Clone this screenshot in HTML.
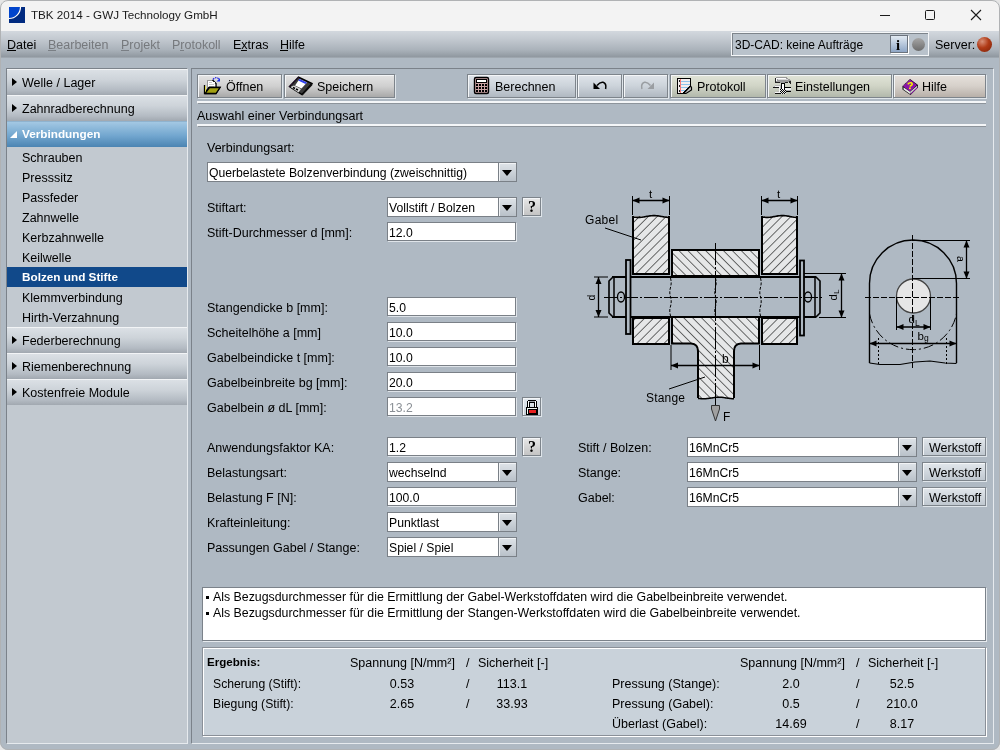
<!DOCTYPE html><html><head><meta charset="utf-8"><style>
*{margin:0;padding:0;box-sizing:border-box}
html,body{width:1000px;height:750px;overflow:hidden;background:#e6e6e6;font-family:"Liberation Sans", sans-serif}
.t{position:absolute;white-space:nowrap;line-height:16px;font-family:"Liberation Sans", sans-serif;will-change:transform}
svg{will-change:transform}
.win{position:absolute;left:0;top:0;width:1000px;height:750px;border-radius:8px;overflow:hidden;background:#afb9c3}
.wb{position:absolute;left:0;top:0;width:1000px;height:750px;border-radius:8px;border:1px solid #b0b2b4;pointer-events:none}
.fld{position:absolute;background:#fff;border:1px solid #7a8087;box-shadow:1px 1px 0 #dfe4e9}
.cbtn{position:absolute;background:linear-gradient(#dfe4e9,#b9c1c9);border:1px solid #7a8087;box-shadow:inset 1px 1px 0 #f2f4f6}
.tri{position:absolute;width:0;height:0;border-left:5px solid transparent;border-right:5px solid transparent;border-top:6px solid #000}
.btn{position:absolute;border:1px solid #7d848b;box-shadow:inset 1px 1px 0 #f4f6f8, 1px 1px 0 #dfe5ea}
</style></head><body><div class="win">
<div style="position:absolute;left:0px;top:0px;width:1000px;height:31px;background:#f3f3f3"></div>
<svg style="position:absolute;left:9px;top:7px" width="16" height="16" viewBox="0 0 16 16">
<rect x="0" y="0" width="16" height="16" fill="#002a80"/>
<path d="M0 0 H11 A11 11 0 0 1 0 11 Z" fill="#0044cc"/>
<path d="M11.5 0 A11.5 11.5 0 0 1 0 11.5" fill="none" stroke="#fff" stroke-width="1.2"/>
</svg>
<div class="t" style="left:31px;top:7px;font-size:11.65px;font-weight:normal;color:#1a1a1a;">TBK 2014 - GWJ Technology GmbH</div>
<div style="position:absolute;left:880px;top:15px;width:10px;height:1px;background:#1a1a1a"></div>
<div style="position:absolute;left:925px;top:10px;width:10px;height:10px;border:1px solid #1a1a1a;border-radius:1.5px"></div>
<svg style="position:absolute;left:970px;top:9px" width="12" height="12" viewBox="0 0 12 12"><path d="M1 1 L11 11 M11 1 L1 11" stroke="#1a1a1a" stroke-width="1.1"/></svg>
<div style="position:absolute;left:0px;top:31px;width:1000px;height:27px;background:linear-gradient(#d3d8de,#c3c9d0 30%,#aab2ba 70%,#9199a1 95%,#a6aeb6)"></div>
<div class="t" style="left:7px;top:37px;font-size:12.5px;font-weight:normal;color:#000;">Datei</div>
<div class="t" style="left:48px;top:37px;font-size:12.5px;font-weight:normal;color:#76797d;">Bearbeiten</div>
<div class="t" style="left:121px;top:37px;font-size:12.5px;font-weight:normal;color:#76797d;">Projekt</div>
<div class="t" style="left:172px;top:37px;font-size:12.5px;font-weight:normal;color:#76797d;">Protokoll</div>
<div class="t" style="left:233px;top:37px;font-size:12.5px;font-weight:normal;color:#000;">Extras</div>
<div class="t" style="left:280px;top:37px;font-size:12.5px;font-weight:normal;color:#000;">Hilfe</div>
<div style="position:absolute;left:7px;top:50px;width:9px;height:1px;background:#000"></div>
<div style="position:absolute;left:48px;top:50px;width:8px;height:1px;background:#7a7f85"></div>
<div style="position:absolute;left:121px;top:50px;width:8px;height:1px;background:#7a7f85"></div>
<div style="position:absolute;left:180px;top:50px;width:4px;height:1px;background:#7a7f85"></div>
<div style="position:absolute;left:241px;top:50px;width:6px;height:1px;background:#000"></div>
<div style="position:absolute;left:280px;top:50px;width:8px;height:1px;background:#000"></div>
<div style="position:absolute;left:731px;top:32px;width:198px;height:24px;border:1px solid #f4f6f8;box-shadow:inset 1px 1px 0 #7d848b;background:#b9c2cb"></div>
<div class="t" style="left:735px;top:37px;font-size:12px;font-weight:normal;color:#000;">3D-CAD: keine Aufträge</div>
<div style="position:absolute;left:890px;top:35px;width:18px;height:18px;background:linear-gradient(#e2eaf2,#b8c8dc 50%,#8ea6c6);border:1px solid #6b737d;box-shadow:1px 1px 0 #fff"></div>
<div class="t" style="left:896px;top:35px;font:bold 14.5px/20px Liberation Serif,serif;color:#000">i</div>
<div style="position:absolute;left:912px;top:38px;width:13px;height:13px;border-radius:50%;background:linear-gradient(#a6a6a6,#6c6c6c)"></div>
<div class="t" style="left:935px;top:37px;font-size:12.5px;font-weight:normal;color:#000;">Server:</div>
<div style="position:absolute;left:977px;top:37px;width:15px;height:15px;border-radius:50%;background:radial-gradient(circle at 35% 30%,#d89078,#b03a16 45%,#7a220a)"></div>
<div style="position:absolute;left:6px;top:68px;width:182px;height:676px;background:#c2c9d0;border-left:1px solid #7b828a;border-top:1px solid #7b828a;border-right:1px solid #e6eaee;border-bottom:1px solid #e6eaee"></div>
<div style="position:absolute;left:7px;top:69px;width:180px;height:26px;background:linear-gradient(#dbe0e5,#cdd3d9 40%,#b4bbc3 80%,#a1a8b0);border-top:1px solid #f2f4f6"></div>
<div style="position:absolute;left:12px;top:78px;width:0;height:0;border-top:4.5px solid transparent;border-bottom:4.5px solid transparent;border-left:5px solid #000"></div>
<div class="t" style="left:22px;top:75px;font-size:12.5px;font-weight:normal;color:#000;">Welle / Lager</div>
<div style="position:absolute;left:7px;top:95px;width:180px;height:26px;background:linear-gradient(#dbe0e5,#cdd3d9 40%,#b4bbc3 80%,#a1a8b0);border-top:1px solid #f2f4f6"></div>
<div style="position:absolute;left:12px;top:104px;width:0;height:0;border-top:4.5px solid transparent;border-bottom:4.5px solid transparent;border-left:5px solid #000"></div>
<div class="t" style="left:22px;top:101px;font-size:12.5px;font-weight:normal;color:#000;">Zahnradberechnung</div>
<div style="position:absolute;left:7px;top:121px;width:180px;height:26px;background:linear-gradient(#a3c8e3,#72a6cf 55%,#4b84b2);border-top:1px solid #8fb3cf"></div>
<div style="position:absolute;left:10px;top:131px;width:0;height:0;border-left:7px solid transparent;border-bottom:7px solid #fff"></div>
<div class="t" style="left:22px;top:126px;font-size:11.75px;font-weight:bold;color:#fff;">Verbindungen</div>
<div class="t" style="left:22px;top:150px;font-size:12.5px;font-weight:normal;color:#000;">Schrauben</div>
<div class="t" style="left:22px;top:170px;font-size:12.5px;font-weight:normal;color:#000;">Presssitz</div>
<div class="t" style="left:22px;top:190px;font-size:12.5px;font-weight:normal;color:#000;">Passfeder</div>
<div class="t" style="left:22px;top:210px;font-size:12.5px;font-weight:normal;color:#000;">Zahnwelle</div>
<div class="t" style="left:22px;top:230px;font-size:12.5px;font-weight:normal;color:#000;">Kerbzahnwelle</div>
<div class="t" style="left:22px;top:250px;font-size:12.5px;font-weight:normal;color:#000;">Keilwelle</div>
<div style="position:absolute;left:7px;top:267px;width:180px;height:20px;background:#11498a"></div>
<div class="t" style="left:22px;top:269px;font-size:11.75px;font-weight:bold;color:#fff;">Bolzen und Stifte</div>
<div class="t" style="left:22px;top:290px;font-size:12.5px;font-weight:normal;color:#000;">Klemmverbindung</div>
<div class="t" style="left:22px;top:310px;font-size:12.5px;font-weight:normal;color:#000;">Hirth-Verzahnung</div>
<div style="position:absolute;left:7px;top:327px;width:180px;height:26px;background:linear-gradient(#dbe0e5,#cdd3d9 40%,#b4bbc3 80%,#a1a8b0);border-top:1px solid #f2f4f6"></div>
<div style="position:absolute;left:12px;top:336px;width:0;height:0;border-top:4.5px solid transparent;border-bottom:4.5px solid transparent;border-left:5px solid #000"></div>
<div class="t" style="left:22px;top:333px;font-size:12.5px;font-weight:normal;color:#000;">Federberechnung</div>
<div style="position:absolute;left:7px;top:353px;width:180px;height:26px;background:linear-gradient(#dbe0e5,#cdd3d9 40%,#b4bbc3 80%,#a1a8b0);border-top:1px solid #f2f4f6"></div>
<div style="position:absolute;left:12px;top:362px;width:0;height:0;border-top:4.5px solid transparent;border-bottom:4.5px solid transparent;border-left:5px solid #000"></div>
<div class="t" style="left:22px;top:359px;font-size:12.5px;font-weight:normal;color:#000;">Riemenberechnung</div>
<div style="position:absolute;left:7px;top:379px;width:180px;height:26px;background:linear-gradient(#dbe0e5,#cdd3d9 40%,#b4bbc3 80%,#a1a8b0);border-top:1px solid #f2f4f6"></div>
<div style="position:absolute;left:12px;top:388px;width:0;height:0;border-top:4.5px solid transparent;border-bottom:4.5px solid transparent;border-left:5px solid #000"></div>
<div class="t" style="left:22px;top:385px;font-size:12.5px;font-weight:normal;color:#000;">Kostenfreie Module</div>
<svg style="position:absolute;left:0;top:0" width="1000" height="750" viewBox="0 0 1000 750">
<defs>
<pattern id="hg" patternUnits="userSpaceOnUse" width="6.3" height="9" patternTransform="rotate(45)">
<rect width="6.3" height="9" fill="#e6e7e8"/><line x1="0" y1="0" x2="0" y2="9" stroke="#000" stroke-width="1.1"/></pattern>
<pattern id="hs" patternUnits="userSpaceOnUse" width="6.3" height="9" patternTransform="rotate(-45)">
<rect width="6.3" height="9" fill="#e6e7e8"/><line x1="0" y1="0" x2="0" y2="9" stroke="#000" stroke-width="1.1"/></pattern>
</defs>
<rect x="633" y="216" width="36" height="58" fill="url(#hg)"/>
<path d="M633,216 V274 H669 V216" fill="none" stroke="#000" stroke-width="2"/>
<polyline points="633.0,216.9 634.0,217.1 635.0,217.2 636.0,217.3 637.0,217.4 638.0,217.4 639.0,217.4 640.0,217.4 641.0,217.3 642.0,217.2 643.0,217.0 644.0,216.9 645.0,216.7 646.0,216.5 647.0,216.3 648.0,216.2 649.0,216.0 650.0,215.9 651.0,215.8 652.0,215.7 653.0,215.6 654.0,215.6 655.0,215.6 656.0,215.7 657.0,215.8 658.0,215.9 659.0,216.0 660.0,216.2 661.0,216.4 662.0,216.5 663.0,216.7 664.0,216.9 665.0,217.0 666.0,217.2 667.0,217.3 668.0,217.4 669.0,217.4" fill="none" stroke="#000" stroke-width="1.6"/>
<rect x="633" y="318" width="36" height="26" fill="url(#hg)" stroke="#000" stroke-width="2"/>
<rect x="762" y="216" width="35" height="58" fill="url(#hg)"/>
<path d="M762,216 V274 H797 V216" fill="none" stroke="#000" stroke-width="2"/>
<polyline points="762.0,216.9 763.0,217.1 764.0,217.2 765.0,217.3 766.0,217.4 767.0,217.4 768.0,217.4 769.0,217.3 770.0,217.3 771.0,217.1 772.0,217.0 773.0,216.8 774.0,216.6 775.0,216.5 776.0,216.3 777.0,216.1 778.0,215.9 779.0,215.8 780.0,215.7 781.0,215.6 782.0,215.6 783.0,215.6 784.0,215.6 785.0,215.7 786.0,215.8 787.0,216.0 788.0,216.1 789.0,216.3 790.0,216.5 791.0,216.7 792.0,216.9 793.0,217.0 794.0,217.2 795.0,217.3 796.0,217.4 797.0,217.4" fill="none" stroke="#000" stroke-width="1.6"/>
<rect x="762" y="318" width="35" height="26" fill="url(#hg)" stroke="#000" stroke-width="2"/>
<rect x="672" y="250" width="87" height="26" fill="url(#hs)" stroke="#000" stroke-width="2"/>
<path d="M672,318 H759 V343.5 H741 Q734,344 734,351 V398 H698 V351 Q698,344 691,343.5 H672 Z" fill="url(#hs)" stroke="none"/>
<path d="M672,318 V343.5 H691 Q698,344 698,351 V398" fill="none" stroke="#000" stroke-width="2"/>
<path d="M759,318 V343.5 H741 Q734,344 734,351 V398" fill="none" stroke="#000" stroke-width="2"/>
<polyline points="698.0,398.4 699.0,398.5 700.0,398.6 701.0,398.7 702.0,398.8 703.0,398.8 704.0,398.8 705.0,398.8 706.0,398.7 707.0,398.6 708.0,398.5 709.0,398.3 710.0,398.2 711.0,398.0 712.0,397.9 713.0,397.7 714.0,397.6 715.0,397.4 716.0,397.3 717.0,397.3 718.0,397.2 719.0,397.2 720.0,397.2 721.0,397.3 722.0,397.3 723.0,397.4 724.0,397.6 725.0,397.7 726.0,397.9 727.0,398.0 728.0,398.2 729.0,398.3 730.0,398.5 731.0,398.6 732.0,398.7 733.0,398.8 734.0,398.8" fill="none" stroke="#000" stroke-width="1.5"/>
<rect x="612" y="277" width="205" height="40" fill="#afb9c3"/>
<line x1="612" y1="277" x2="816" y2="277" stroke="#000" stroke-width="2"/>
<line x1="612" y1="317" x2="816" y2="317" stroke="#000" stroke-width="2"/>
<path d="M614,277 H613 L609,281 V313 L613,317 H614" fill="none" stroke="#000" stroke-width="1.6"/>
<line x1="614" y1="277" x2="614" y2="317" stroke="#000" stroke-width="1.5"/>
<path d="M815,277 H816 L820,281 V313 L816,317 H815" fill="none" stroke="#000" stroke-width="1.6"/>
<line x1="815" y1="277" x2="815" y2="317" stroke="#000" stroke-width="1.5"/>
<ellipse cx="621" cy="297" rx="3.5" ry="5" fill="none" stroke="#000" stroke-width="1.3"/>
<ellipse cx="808" cy="297" rx="3.5" ry="5" fill="none" stroke="#000" stroke-width="1.3"/>
<rect x="626" y="260" width="4.5" height="74" fill="#afb9c3" stroke="#000" stroke-width="1.8"/>
<rect x="800" y="260.5" width="4" height="75" fill="#afb9c3" stroke="#000" stroke-width="1.8"/>
<polyline points="670.5,278.0 670.7,279.0 670.9,280.0 671.1,281.0 671.2,282.0 671.2,283.0 671.1,284.0 671.0,285.0 670.8,286.0 670.6,287.0 670.4,288.0 670.1,289.0 670.0,290.0 669.8,291.0 669.8,292.0 669.8,293.0 669.9,294.0 670.1,295.0 670.3,296.0 670.5,297.0 670.8,298.0 671.0,299.0 671.1,300.0 671.2,301.0 671.2,302.0 671.1,303.0 671.0,304.0 670.8,305.0 670.6,306.0 670.3,307.0 670.1,308.0 669.9,309.0 669.8,310.0 669.8,311.0 669.8,312.0 670.0,313.0 670.1,314.0 670.3,315.0 670.6,316.0" fill="none" stroke="#000" stroke-width="1" stroke-dasharray="3,1.5"/>
<polyline points="715.5,278.0 715.7,279.0 715.9,280.0 716.1,281.0 716.2,282.0 716.2,283.0 716.1,284.0 716.0,285.0 715.8,286.0 715.6,287.0 715.4,288.0 715.1,289.0 715.0,290.0 714.8,291.0 714.8,292.0 714.8,293.0 714.9,294.0 715.1,295.0 715.3,296.0 715.5,297.0 715.8,298.0 716.0,299.0 716.1,300.0 716.2,301.0 716.2,302.0 716.1,303.0 716.0,304.0 715.8,305.0 715.6,306.0 715.3,307.0 715.1,308.0 714.9,309.0 714.8,310.0 714.8,311.0 714.8,312.0 715.0,313.0 715.1,314.0 715.3,315.0 715.6,316.0" fill="none" stroke="#000" stroke-width="1" stroke-dasharray="3,1.5"/>
<polyline points="760.5,278.0 760.7,279.0 760.9,280.0 761.1,281.0 761.2,282.0 761.2,283.0 761.1,284.0 761.0,285.0 760.8,286.0 760.6,287.0 760.4,288.0 760.1,289.0 760.0,290.0 759.8,291.0 759.8,292.0 759.8,293.0 759.9,294.0 760.1,295.0 760.3,296.0 760.5,297.0 760.8,298.0 761.0,299.0 761.1,300.0 761.2,301.0 761.2,302.0 761.1,303.0 761.0,304.0 760.8,305.0 760.6,306.0 760.3,307.0 760.1,308.0 759.9,309.0 759.8,310.0 759.8,311.0 759.8,312.0 760.0,313.0 760.1,314.0 760.3,315.0 760.6,316.0" fill="none" stroke="#000" stroke-width="1" stroke-dasharray="3,1.5"/>
<line x1="604" y1="297.5" x2="824" y2="297.5" stroke="#000" stroke-width="1" stroke-dasharray="14,2,2,2"/>
<line x1="715.5" y1="243" x2="715.5" y2="406" stroke="#000" stroke-width="1" stroke-dasharray="22,2,2,2"/>
<line x1="632.5" y1="196" x2="632.5" y2="215" stroke="#000" stroke-width="1"/>
<line x1="669.5" y1="196" x2="669.5" y2="215" stroke="#000" stroke-width="1"/>
<line x1="632.5" y1="200.5" x2="669.5" y2="200.5" stroke="#000" stroke-width="1.3"/>
<path d="M632.5,200.5 l7,-3 v6 z M669.5,200.5 l-7,-3 v6 z" fill="#000"/>
<text x="649" y="198" font-family="Liberation Sans" font-size="11.5">t</text>
<line x1="761.5" y1="196" x2="761.5" y2="215" stroke="#000" stroke-width="1"/>
<line x1="797.5" y1="196" x2="797.5" y2="215" stroke="#000" stroke-width="1"/>
<line x1="761.5" y1="200.5" x2="797.5" y2="200.5" stroke="#000" stroke-width="1.3"/>
<path d="M761.5,200.5 l7,-3 v6 z M797.5,200.5 l-7,-3 v6 z" fill="#000"/>
<text x="777" y="198" font-family="Liberation Sans" font-size="11.5">t</text>
<text x="585" y="223.5" font-family="Liberation Sans" font-size="12" letter-spacing="0.3">Gabel</text>
<line x1="605" y1="228" x2="641" y2="240" stroke="#000" stroke-width="1"/>
<line x1="594" y1="277" x2="608" y2="277" stroke="#000" stroke-width="1"/>
<line x1="594" y1="317" x2="608" y2="317" stroke="#000" stroke-width="1"/>
<line x1="598.5" y1="277" x2="598.5" y2="317" stroke="#000" stroke-width="1.3"/>
<path d="M598.5,277 l-3,7 h6 z M598.5,317 l-3,-7 h6 z" fill="#000"/>
<text transform="translate(594.5,300.5) rotate(-90)" font-family="Liberation Sans" font-size="10.5">d</text>
<line x1="804" y1="273.5" x2="846" y2="273.5" stroke="#000" stroke-width="1"/>
<line x1="819" y1="317.5" x2="846" y2="317.5" stroke="#000" stroke-width="1"/>
<line x1="841.5" y1="273.5" x2="841.5" y2="317.5" stroke="#000" stroke-width="1.3"/>
<path d="M841.5,273.5 l-3,7 h6 z M841.5,317.5 l-3,-7 h6 z" fill="#000"/>
<text transform="translate(836.5,300.5) rotate(-90)" font-family="Liberation Sans" font-size="11.5">d<tspan font-size="8" dy="2.5">L</tspan></text>
<line x1="671" y1="345" x2="671" y2="370" stroke="#000" stroke-width="1"/>
<line x1="759.5" y1="345" x2="759.5" y2="370" stroke="#000" stroke-width="1"/>
<line x1="671" y1="365.5" x2="759.5" y2="365.5" stroke="#000" stroke-width="1.3"/>
<path d="M671,365.5 l7,-3 v6 z M759.5,365.5 l-7,-3 v6 z" fill="#000"/>
<text x="722" y="363" font-family="Liberation Sans" font-size="12">b</text>
<text x="646" y="402" font-family="Liberation Sans" font-size="12" letter-spacing="0.2">Stange</text>
<line x1="669" y1="389" x2="705" y2="377" stroke="#000" stroke-width="1"/>
<path d="M711.5,405.5 H719.5 V409 L715.5,421 L711.5,409 Z" fill="#a0a0a0" stroke="#333" stroke-width="1"/>
<text x="723" y="421" font-family="Liberation Sans" font-size="12">F</text>
<path d="M869.5,363 V283.5 A43.5,43.5 0 0 1 956.5,283.5 V363" fill="none" stroke="#000" stroke-width="1.4"/>
<polyline points="869.5,363 880,364.5 900,364.5 915,362 930,361 945,363 956.5,363.5" fill="none" stroke="#000" stroke-width="1.2"/>
<path d="M869.5,313.7 A44.3,44.3 0 0 0 956.5,313.7" fill="none" stroke="#000" stroke-width="1" stroke-dasharray="10,3,2,3"/>
<line x1="878.5" y1="338" x2="878.5" y2="364" stroke="#000" stroke-width="1" stroke-dasharray="2,2"/>
<line x1="946.5" y1="338" x2="946.5" y2="364" stroke="#000" stroke-width="1" stroke-dasharray="2,2"/>
<circle cx="913.5" cy="296" r="17" fill="#e6e6e6" stroke="#444" stroke-width="1.3"/>
<line x1="912.5" y1="235" x2="912.5" y2="368" stroke="#000" stroke-width="1" stroke-dasharray="6,2"/>
<line x1="865" y1="297.5" x2="961" y2="297.5" stroke="#000" stroke-width="1" stroke-dasharray="6,2"/>
<line x1="913" y1="240.5" x2="970" y2="240.5" stroke="#000" stroke-width="1"/>
<line x1="913" y1="278.5" x2="970" y2="278.5" stroke="#000" stroke-width="1"/>
<line x1="966.5" y1="240.5" x2="966.5" y2="278.5" stroke="#000" stroke-width="1.3"/>
<path d="M966.5,240.5 l-3,7 h6 z M966.5,278.5 l-3,-7 h6 z" fill="#000"/>
<text transform="translate(957,256) rotate(90)" font-family="Liberation Sans" font-size="10.5">a</text>
<line x1="896.5" y1="297" x2="896.5" y2="330" stroke="#000" stroke-width="1"/>
<line x1="930.5" y1="297" x2="930.5" y2="330" stroke="#000" stroke-width="1"/>
<line x1="896.5" y1="327" x2="930.5" y2="327" stroke="#000" stroke-width="1.3"/>
<path d="M896.5,327 l7,-3 v6 z M930.5,327 l-7,-3 v6 z" fill="#000"/>
<text x="908.5" y="323" font-family="Liberation Sans" font-size="11.5">d<tspan font-size="8.5" dy="2.5">L</tspan></text>
<line x1="869.5" y1="343.5" x2="956.5" y2="343.5" stroke="#000" stroke-width="1.3"/>
<path d="M869.5,343.5 l7,-3 v6 z M956.5,343.5 l-7,-3 v6 z" fill="#000"/>
<text x="917.5" y="339.5" font-family="Liberation Sans" font-size="11.5">b<tspan font-size="8.5" dy="1">g</tspan></text>
</svg>
<div style="position:absolute;left:191px;top:68px;width:803px;height:676px;border-left:1px solid #7b828a;border-top:1px solid #7b828a;border-right:1px solid #e6eaee;border-bottom:1px solid #e6eaee"></div>
<div class="btn" style="left:197px;top:74px;width:85px;height:24px;background:linear-gradient(#e4e4e4,#d0d0d0 50%,#a9a9a9)"></div>
<div class="t" style="left:226px;top:79px;font-size:12.5px;font-weight:normal;color:#000;">Öffnen</div>
<div class="btn" style="left:284px;top:74px;width:111px;height:24px;background:linear-gradient(#e4e4e4,#d0d0d0 50%,#a9a9a9)"></div>
<div class="t" style="left:317px;top:79px;font-size:12.5px;font-weight:normal;color:#000;">Speichern</div>
<div class="btn" style="left:467px;top:74px;width:109px;height:24px;background:linear-gradient(#dfe4ea,#ccd3da 50%,#b0b8c1)"></div>
<div class="t" style="left:495px;top:79px;font-size:12.5px;font-weight:normal;color:#000;">Berechnen</div>
<div class="btn" style="left:577px;top:74px;width:45px;height:24px;background:linear-gradient(#dfe4ea,#ccd3da 50%,#b0b8c1)"></div>
<div class="btn" style="left:623px;top:74px;width:45px;height:24px;background:linear-gradient(#dfe4ea,#ccd3da 50%,#b0b8c1)"></div>
<div class="btn" style="left:670px;top:74px;width:96px;height:24px;background:linear-gradient(#e1e4d8,#d0d4c6 50%,#b2b8ab)"></div>
<div class="t" style="left:697px;top:79px;font-size:12.5px;font-weight:normal;color:#000;">Protokoll</div>
<div class="btn" style="left:767px;top:74px;width:125px;height:24px;background:linear-gradient(#e1e4d8,#d0d4c6 50%,#b2b8ab)"></div>
<div class="t" style="left:795px;top:79px;font-size:12.5px;font-weight:normal;color:#000;">Einstellungen</div>
<div class="btn" style="left:893px;top:74px;width:93px;height:24px;background:linear-gradient(#e6e1dc,#d6d0ca 50%,#b8b0a9)"></div>
<div class="t" style="left:922px;top:79px;font-size:12.5px;font-weight:normal;color:#000;">Hilfe</div>
<svg style="position:absolute;left:200px;top:74px" width="24" height="24" viewBox="0 0 24 24" shape-rendering="crispEdges">
<path d="M7 6 H13 L16 9 V13 H7 Z" fill="#fff" stroke="#999" stroke-width="1"/>
<path d="M12.5 6 L16 9.5 V13" fill="none" stroke="#000" stroke-width="1.2" shape-rendering="auto"/>
<rect x="13" y="7.5" width="1.5" height="1.5" fill="#fff"/>
<path d="M8.5 8.5 H12 M8.5 10.5 H14 M8.5 12.5 H14" stroke="#bbb" stroke-width="0.8"/>
<path d="M4.5 11 V19.5 H16 L20 13.5 H9 L5.5 18" fill="none" stroke="#000" stroke-width="1.3" shape-rendering="auto"/>
<path d="M5 11.5 V19 H6 L10 14 H19.5 L15.8 19 H6" fill="#a3a012"/>
<path d="M5.5 11.5 V18.5" stroke="#e0dc40" stroke-width="1"/>
<path d="M4.5 19.5 H16 L20 13.5 H9.5 L5.5 18.8" fill="none" stroke="#000" stroke-width="1.3" shape-rendering="auto"/>
<path d="M13 5.5 Q16 2 19 5" fill="none" stroke="#2020e0" stroke-width="1.2" stroke-dasharray="1.5,1" shape-rendering="auto"/>
<path d="M20 4 L20 7.5 L16.5 7.5 Z" fill="#1a30f0" shape-rendering="auto"/>
</svg>
<svg style="position:absolute;left:286px;top:74px" width="30" height="24" viewBox="0 0 30 24" shape-rendering="crispEdges">
<g shape-rendering="auto">
<path d="M3.5 12.5 L12.5 3 L26 9.5 L16 20.5 Z" fill="#3a3a3a" stroke="#000" stroke-width="1.4"/>
<path d="M13.5 5 L21 8.5 L15.5 14.5 L9 11.5 Z" fill="#fff"/>
<path d="M13.5 5 L21 8.5 L19.5 10 L12.2 6.5 Z" fill="#3040f0"/>
<path d="M4.5 13 L8 11.5 L15 15 L12.5 18.5 Z" fill="#d8d8d8"/>
<path d="M7 13.5 L9 14.5 M10 15 L12 16" stroke="#000" stroke-width="1.5"/>
<path d="M16 20.5 L26 9.5 L26.5 11 L16.5 21.5 Z" fill="#111"/>
<path d="M3.5 12.5 L12.5 3" stroke="#5a1a70" stroke-width="0.8" stroke-dasharray="1,1"/>
</g></svg>
<svg style="position:absolute;left:470px;top:74px" width="24" height="24" viewBox="0 0 24 24" shape-rendering="crispEdges">
<rect x="4.5" y="3.5" width="14" height="16" rx="1.5" fill="#caa3a5" stroke="#000" stroke-width="1.4" shape-rendering="auto"/>
<rect x="6.5" y="5.5" width="10" height="3" fill="#fff" stroke="#000" stroke-width="1"/>
<rect x="6" y="10" width="2" height="2" fill="#000"/><rect x="6" y="13" width="2" height="2" fill="#000"/><rect x="6" y="16" width="2" height="2" fill="#000"/><rect x="9" y="10" width="2" height="2" fill="#000"/><rect x="9" y="13" width="2" height="2" fill="#000"/><rect x="9" y="16" width="2" height="2" fill="#000"/><rect x="12" y="10" width="2" height="2" fill="#000"/><rect x="12" y="13" width="2" height="2" fill="#000"/><rect x="12" y="16" width="2" height="2" fill="#000"/><rect x="15" y="10" width="2" height="2" fill="#000"/><rect x="15" y="13" width="2" height="2" fill="#000"/><rect x="15" y="16" width="2" height="2" fill="#000"/></svg>
<svg style="position:absolute;left:588px;top:76px" width="24" height="16" viewBox="0 0 24 16" shape-rendering="crispEdges"><g shape-rendering="auto" transform="translate(-588,-76)">
<path d="M597,85.5 Q600,81.8 603,82.3 Q606.8,83.5 605.6,89" fill="none" stroke="#000" stroke-width="1.5"/>
<path d="M593.5,82.5 L593.5,89 L600,89 Z" fill="#000"/></g></svg>
<svg style="position:absolute;left:636px;top:76px" width="24" height="16" viewBox="0 0 24 16" shape-rendering="crispEdges"><g shape-rendering="auto" transform="translate(-636,-76) translate(1247.5,0) scale(-1,1)">
<path d="M597,85.5 Q600,81.8 603,82.3 Q606.8,83.5 605.6,89" fill="none" stroke="#9a9ea2" stroke-width="1.5"/>
<path d="M593.5,82.5 L593.5,89 L600,89 Z" fill="#9a9ea2"/></g></svg>
<svg style="position:absolute;left:673px;top:74px" width="24" height="24" viewBox="0 0 24 24" shape-rendering="crispEdges">
<path d="M4.5 4.5 H17.5 V12 L10.5 19.5 H4.5 Z" fill="#f4eeee" stroke="#000" stroke-width="1.4"/>
<path d="M7 7.5 H17 M7 10.5 H17 M7 13.5 H15 M7 16.5 H12" stroke="#8ec4ec" stroke-width="1"/>
<path d="M7.5 5 V19" stroke="#f07878" stroke-width="1"/>
<rect x="5.5" y="6" width="1" height="1.5" fill="#222"/><rect x="5.5" y="11" width="1" height="1.5" fill="#222"/><rect x="5.5" y="16" width="1" height="1.5" fill="#222"/>
<g shape-rendering="auto"><path d="M10.5 19.5 L17.5 12 L18.5 13.5 L18.5 16 L13 19.5 Z" fill="#c8c8c8" stroke="#000" stroke-width="1.2"/></g>
</svg>
<svg style="position:absolute;left:770px;top:74px" width="24" height="24" viewBox="0 0 24 24" shape-rendering="crispEdges">
<path d="M5,4 L6,3 H16 L19,5 L21,7 V10 H20 L18,8 H15 V9 H10 V8 H7 L6,9 H5 Z" fill="#9a9a9a"/>
<path d="M6,4 H15 L17,5 H7 V7 H6 Z" fill="#fdfdfd"/>
<path d="M8,5 H17 L18,6 H8 Z" fill="#d8d8d8"/>
<path d="M5,8 H10 V9 H5 Z M15,8 H18 V9 H15 Z M19,7 H21 V10 H20 V9 H19 Z M5,4 H6 V9 H5 Z" fill="#222"/>
<rect x="11" y="9" width="4" height="11" fill="#000"/>
<rect x="12" y="10" width="2" height="5" fill="#fff"/>
<path d="M4,12 L6,11 H11 V20 H6 L4,19 L3,18 H7 V17 H9 V14 H6 L3,14 Z" fill="#b8b8b8"/>
<path d="M5,12 H10 V13 H5 Z M5,18 H10 V19 H5 Z M9,13 H10 V18 H9 Z" fill="#f4f4f4"/>
<path d="M3,13 H9 V14 H3 Z M3,18 L4,19 H10 V20 H5 Z" fill="#111"/>
<rect x="15" y="13" width="6" height="5" fill="#f2f2f2"/>
<rect x="15" y="13" width="6" height="1" fill="#000"/>
<rect x="15" y="17" width="6" height="1" fill="#000"/>
<rect x="15" y="16" width="6" height="1" fill="#aaa"/>
<rect x="10" y="15" width="1" height="1" fill="#000"/><rect x="10" y="16" width="1" height="1" fill="#e8e8e8"/><rect x="10" y="17" width="1" height="1" fill="#000"/><rect x="10" y="18" width="1" height="1" fill="#e8e8e8"/><rect x="10" y="19" width="1" height="1" fill="#000"/><rect x="11" y="15" width="1" height="1" fill="#e8e8e8"/><rect x="11" y="16" width="1" height="1" fill="#000"/><rect x="11" y="17" width="1" height="1" fill="#e8e8e8"/><rect x="11" y="18" width="1" height="1" fill="#000"/><rect x="11" y="19" width="1" height="1" fill="#e8e8e8"/><rect x="12" y="15" width="1" height="1" fill="#000"/><rect x="12" y="16" width="1" height="1" fill="#e8e8e8"/><rect x="12" y="17" width="1" height="1" fill="#000"/><rect x="12" y="18" width="1" height="1" fill="#e8e8e8"/><rect x="12" y="19" width="1" height="1" fill="#000"/><rect x="13" y="15" width="1" height="1" fill="#e8e8e8"/><rect x="13" y="16" width="1" height="1" fill="#000"/><rect x="13" y="17" width="1" height="1" fill="#e8e8e8"/><rect x="13" y="18" width="1" height="1" fill="#000"/><rect x="13" y="19" width="1" height="1" fill="#e8e8e8"/><rect x="14" y="15" width="1" height="1" fill="#000"/><rect x="14" y="16" width="1" height="1" fill="#e8e8e8"/><rect x="14" y="17" width="1" height="1" fill="#000"/><rect x="14" y="18" width="1" height="1" fill="#e8e8e8"/><rect x="14" y="19" width="1" height="1" fill="#000"/><rect x="15" y="15" width="1" height="1" fill="#e8e8e8"/><rect x="15" y="16" width="1" height="1" fill="#000"/><rect x="15" y="17" width="1" height="1" fill="#e8e8e8"/><rect x="15" y="18" width="1" height="1" fill="#000"/><rect x="15" y="19" width="1" height="1" fill="#e8e8e8"/>
</svg>
<svg style="position:absolute;left:897px;top:74px" width="24" height="24" viewBox="0 0 24 24" shape-rendering="crispEdges"><g shape-rendering="auto">
<path d="M5.5,15.5 V12 L13,5 L21,11 V13.5 L13.5,21 L5.5,15.5 Z" fill="#000"/>
<path d="M6,12.3 L13,5.6 L20,11 L13,17.5 Z" fill="#8c14a8"/>
<path d="M6.5,13.2 L13,17.8 V20 L6.5,15.6 Z" fill="#e6e6e6"/>
<path d="M13,17.8 L20.3,11.6 V13.3 L13.5,20 Z" fill="#d0d0d0"/>
<path d="M13.4,20.2 L20.5,13.5" stroke="#8c14a8" stroke-width="1"/>
<path d="M6,12 L13,5.5" stroke="#c080d0" stroke-width="0.8" stroke-dasharray="1,1"/>
<path d="M10.8,10.3 Q12,8.3 14.2,8.8 Q16,9.6 14.6,11.2 L13.4,12 V12.8" fill="none" stroke="#f0f000" stroke-width="1.6"/>
<rect x="12" y="13.5" width="1.8" height="1.6" fill="#f0f000"/>
</g></svg>
<div style="position:absolute;left:197px;top:101px;width:789px;height:3px;border-top:2px solid #f4f6f8;border-left:1px solid #f4f6f8;border-bottom:1px solid #8d949b"></div>
<div class="t" style="left:197px;top:108px;font-size:12.5px;font-weight:normal;color:#000;">Auswahl einer Verbindungsart</div>
<div style="position:absolute;left:197px;top:124px;width:789px;height:3px;border-top:2px solid #f4f6f8;border-left:1px solid #f4f6f8;border-bottom:1px solid #8d949b"></div>
<div class="t" style="left:207px;top:140px;font-size:12.5px;font-weight:normal;color:#000;">Verbindungsart:</div>
<div class="fld" style="left:207px;top:162px;width:310px;height:20px;box-shadow:none"></div>
<div class="t" style="left:209px;top:165px;font-size:12.2px;font-weight:normal;color:#000;">Querbelastete Bolzenverbindung (zweischnittig)</div>
<div class="cbtn" style="left:498px;top:162px;width:19px;height:20px"></div>
<div class="tri" style="left:502px;top:170px"></div>
<div class="t" style="left:207px;top:200px;font-size:12.5px;font-weight:normal;color:#000;">Stiftart:</div>
<div class="fld" style="left:387px;top:197px;width:130px;height:20px;box-shadow:none"></div>
<div class="t" style="left:389px;top:200px;font-size:12.2px;font-weight:normal;color:#000;">Vollstift / Bolzen</div>
<div class="cbtn" style="left:498px;top:197px;width:19px;height:20px"></div>
<div class="tri" style="left:502px;top:205px"></div>
<div class="btn" style="left:522px;top:197px;width:19px;height:19px;background:linear-gradient(#e8e8e8,#c4c4c4)"></div>
<div class="t" style="left:528px;top:197px;font:bold 16px/20px 'Liberation Serif',serif">?</div>
<div class="t" style="left:207px;top:225px;font-size:12.5px;font-weight:normal;color:#000;">Stift-Durchmesser d [mm]:</div>
<div class="fld" style="left:387px;top:222px;width:129px;height:19px"></div>
<div class="t" style="left:389px;top:225px;font-size:12.2px;font-weight:normal;color:#000;">12.0</div>
<div class="t" style="left:207px;top:300px;font-size:12.5px;font-weight:normal;color:#000;">Stangendicke b [mm]:</div>
<div class="fld" style="left:387px;top:297px;width:129px;height:19px"></div>
<div class="t" style="left:389px;top:300px;font-size:12.2px;font-weight:normal;color:#000;">5.0</div>
<div class="t" style="left:207px;top:325px;font-size:12.5px;font-weight:normal;color:#000;">Scheitelhöhe a [mm]</div>
<div class="fld" style="left:387px;top:322px;width:129px;height:19px"></div>
<div class="t" style="left:389px;top:325px;font-size:12.2px;font-weight:normal;color:#000;">10.0</div>
<div class="t" style="left:207px;top:350px;font-size:12.5px;font-weight:normal;color:#000;">Gabelbeindicke t [mm]:</div>
<div class="fld" style="left:387px;top:347px;width:129px;height:19px"></div>
<div class="t" style="left:389px;top:350px;font-size:12.2px;font-weight:normal;color:#000;">10.0</div>
<div class="t" style="left:207px;top:375px;font-size:12.5px;font-weight:normal;color:#000;">Gabelbeinbreite bg [mm]:</div>
<div class="fld" style="left:387px;top:372px;width:129px;height:19px"></div>
<div class="t" style="left:389px;top:375px;font-size:12.2px;font-weight:normal;color:#000;">20.0</div>
<div class="t" style="left:207px;top:400px;font-size:12.5px;font-weight:normal;color:#000;">Gabelbein ø dL [mm]:</div>
<div class="fld" style="left:387px;top:397px;width:129px;height:19px"></div>
<div class="t" style="left:389px;top:400px;font-size:12.2px;font-weight:normal;color:#8a8f95;">13.2</div>
<div class="btn" style="left:522px;top:397px;width:19px;height:19px;background:linear-gradient(#e4eaef,#c6ced6)"></div>
<svg style="position:absolute;left:518px;top:393px" width="28" height="28" viewBox="518 393 28 28" shape-rendering="crispEdges">
<path d="M527,407 V401 H528 V400 H536 V401 H537 V407 H534 V403 H530 V407 Z" fill="#000"/>
<rect x="528" y="401" width="1" height="6" fill="#fff"/><rect x="535" y="401" width="1" height="6" fill="#fff"/>
<rect x="529" y="401" width="6" height="1" fill="#9aa0a6"/>
<rect x="526" y="407" width="12" height="8" fill="#000"/>
<rect x="527" y="408" width="10" height="1" fill="#f4f8f4"/><rect x="527" y="408" width="1" height="6" fill="#f4f8f4"/>
<rect x="529" y="410" width="7" height="3" fill="#e82020"/>
</svg>
<div class="t" style="left:207px;top:440px;font-size:12.5px;font-weight:normal;color:#000;">Anwendungsfaktor KA:</div>
<div class="fld" style="left:387px;top:437px;width:129px;height:19px"></div>
<div class="t" style="left:389px;top:440px;font-size:12.2px;font-weight:normal;color:#000;">1.2</div>
<div class="btn" style="left:522px;top:437px;width:19px;height:19px;background:linear-gradient(#e8e8e8,#c4c4c4)"></div>
<div class="t" style="left:528px;top:437px;font:bold 16px/20px 'Liberation Serif',serif">?</div>
<div class="t" style="left:207px;top:465px;font-size:12.5px;font-weight:normal;color:#000;">Belastungsart:</div>
<div class="fld" style="left:387px;top:462px;width:130px;height:20px;box-shadow:none"></div>
<div class="t" style="left:389px;top:465px;font-size:12.2px;font-weight:normal;color:#000;">wechselnd</div>
<div class="cbtn" style="left:498px;top:462px;width:19px;height:20px"></div>
<div class="tri" style="left:502px;top:470px"></div>
<div class="t" style="left:207px;top:490px;font-size:12.5px;font-weight:normal;color:#000;">Belastung F [N]:</div>
<div class="fld" style="left:387px;top:487px;width:129px;height:19px"></div>
<div class="t" style="left:389px;top:490px;font-size:12.2px;font-weight:normal;color:#000;">100.0</div>
<div class="t" style="left:207px;top:515px;font-size:12.5px;font-weight:normal;color:#000;">Krafteinleitung:</div>
<div class="fld" style="left:387px;top:512px;width:130px;height:20px;box-shadow:none"></div>
<div class="t" style="left:389px;top:515px;font-size:12.2px;font-weight:normal;color:#000;">Punktlast</div>
<div class="cbtn" style="left:498px;top:512px;width:19px;height:20px"></div>
<div class="tri" style="left:502px;top:520px"></div>
<div class="t" style="left:207px;top:540px;font-size:12.5px;font-weight:normal;color:#000;">Passungen Gabel / Stange:</div>
<div class="fld" style="left:387px;top:537px;width:130px;height:20px;box-shadow:none"></div>
<div class="t" style="left:389px;top:540px;font-size:12.2px;font-weight:normal;color:#000;">Spiel / Spiel</div>
<div class="cbtn" style="left:498px;top:537px;width:19px;height:20px"></div>
<div class="tri" style="left:502px;top:545px"></div>
<div class="t" style="left:578px;top:440px;font-size:12.5px;font-weight:normal;color:#000;">Stift / Bolzen:</div>
<div class="fld" style="left:687px;top:437px;width:230px;height:20px;box-shadow:none"></div>
<div class="t" style="left:689px;top:440px;font-size:12.2px;font-weight:normal;color:#000;">16MnCr5</div>
<div class="cbtn" style="left:898px;top:437px;width:19px;height:20px"></div>
<div class="tri" style="left:902px;top:445px"></div>
<div class="btn" style="left:922px;top:437px;width:64px;height:19px;background:linear-gradient(#e2e7ec,#c0c8d0)"></div>
<div class="t" style="left:929px;top:440px;font-size:12.5px;font-weight:normal;color:#000;">Werkstoff</div>
<div class="t" style="left:578px;top:465px;font-size:12.5px;font-weight:normal;color:#000;">Stange:</div>
<div class="fld" style="left:687px;top:462px;width:230px;height:20px;box-shadow:none"></div>
<div class="t" style="left:689px;top:465px;font-size:12.2px;font-weight:normal;color:#000;">16MnCr5</div>
<div class="cbtn" style="left:898px;top:462px;width:19px;height:20px"></div>
<div class="tri" style="left:902px;top:470px"></div>
<div class="btn" style="left:922px;top:462px;width:64px;height:19px;background:linear-gradient(#e2e7ec,#c0c8d0)"></div>
<div class="t" style="left:929px;top:465px;font-size:12.5px;font-weight:normal;color:#000;">Werkstoff</div>
<div class="t" style="left:578px;top:490px;font-size:12.5px;font-weight:normal;color:#000;">Gabel:</div>
<div class="fld" style="left:687px;top:487px;width:230px;height:20px;box-shadow:none"></div>
<div class="t" style="left:689px;top:490px;font-size:12.2px;font-weight:normal;color:#000;">16MnCr5</div>
<div class="cbtn" style="left:898px;top:487px;width:19px;height:20px"></div>
<div class="tri" style="left:902px;top:495px"></div>
<div class="btn" style="left:922px;top:487px;width:64px;height:19px;background:linear-gradient(#e2e7ec,#c0c8d0)"></div>
<div class="t" style="left:929px;top:490px;font-size:12.5px;font-weight:normal;color:#000;">Werkstoff</div>
<div style="position:absolute;left:202px;top:587px;width:784px;height:54px;background:#fff;border:1px solid #7b828a;box-shadow:1px 1px 0 #e6eaee"></div>
<div style="position:absolute;left:206px;top:596px;width:3px;height:3px;background:#000"></div>
<div class="t" style="left:213px;top:589px;font-size:12.35px;font-weight:normal;color:#000;">Als Bezugsdurchmesser für die Ermittlung der Gabel-Werkstoffdaten wird die Gabelbeinbreite verwendet.</div>
<div style="position:absolute;left:206px;top:612px;width:3px;height:3px;background:#000"></div>
<div class="t" style="left:213px;top:605px;font-size:12.35px;font-weight:normal;color:#000;">Als Bezugsdurchmesser für die Ermittlung der Stangen-Werkstoffdaten wird die Gabelbeinbreite verwendet.</div>
<div style="position:absolute;left:202px;top:647px;width:784px;height:89px;background:#c9d2da;border:1px solid #8a9098;box-shadow:inset 1px 1px 0 #fff,1px 1px 0 #fff"></div>
<div class="t" style="left:206.5px;top:653.5px;font-size:11.6px;font-weight:bold;color:#000;">Ergebnis:</div>
<div class="t" style="left:350px;top:655px;font-size:12.5px;font-weight:normal;color:#000;">Spannung [N/mm²]</div>
<div class="t" style="left:466px;top:655px;font-size:12.5px;font-weight:normal;color:#000;">/</div>
<div class="t" style="left:478px;top:655px;font-size:12.5px;font-weight:normal;color:#000;">Sicherheit [-]</div>
<div class="t" style="left:740px;top:655px;font-size:12.5px;font-weight:normal;color:#000;">Spannung [N/mm²]</div>
<div class="t" style="left:856px;top:655px;font-size:12.5px;font-weight:normal;color:#000;">/</div>
<div class="t" style="left:868px;top:655px;font-size:12.5px;font-weight:normal;color:#000;">Sicherheit [-]</div>
<div class="t" style="left:212.5px;top:676px;font-size:12.2px;font-weight:normal;color:#000;">Scherung (Stift):</div>
<div class="t" style="left:352px;width:100px;text-align:center;top:676px;font-size:12.5px">0.53</div>
<div class="t" style="left:466px;top:676px;font-size:12.5px;font-weight:normal;color:#000;">/</div>
<div class="t" style="left:462px;width:100px;text-align:center;top:676px;font-size:12.5px">113.1</div>
<div class="t" style="left:212.5px;top:696px;font-size:12.2px;font-weight:normal;color:#000;">Biegung (Stift):</div>
<div class="t" style="left:352px;width:100px;text-align:center;top:696px;font-size:12.5px">2.65</div>
<div class="t" style="left:466px;top:696px;font-size:12.5px;font-weight:normal;color:#000;">/</div>
<div class="t" style="left:462px;width:100px;text-align:center;top:696px;font-size:12.5px">33.93</div>
<div class="t" style="left:612px;top:676px;font-size:12.5px;font-weight:normal;color:#000;">Pressung (Stange):</div>
<div class="t" style="left:741px;width:100px;text-align:center;top:676px;font-size:12.5px">2.0</div>
<div class="t" style="left:856px;top:676px;font-size:12.5px;font-weight:normal;color:#000;">/</div>
<div class="t" style="left:852px;width:100px;text-align:center;top:676px;font-size:12.5px">52.5</div>
<div class="t" style="left:612px;top:696px;font-size:12.5px;font-weight:normal;color:#000;">Pressung (Gabel):</div>
<div class="t" style="left:741px;width:100px;text-align:center;top:696px;font-size:12.5px">0.5</div>
<div class="t" style="left:856px;top:696px;font-size:12.5px;font-weight:normal;color:#000;">/</div>
<div class="t" style="left:852px;width:100px;text-align:center;top:696px;font-size:12.5px">210.0</div>
<div class="t" style="left:612px;top:716px;font-size:12.5px;font-weight:normal;color:#000;">Überlast (Gabel):</div>
<div class="t" style="left:741px;width:100px;text-align:center;top:716px;font-size:12.5px">14.69</div>
<div class="t" style="left:856px;top:716px;font-size:12.5px;font-weight:normal;color:#000;">/</div>
<div class="t" style="left:852px;width:100px;text-align:center;top:716px;font-size:12.5px">8.17</div>
</div>
<div class="wb"></div></body></html>
